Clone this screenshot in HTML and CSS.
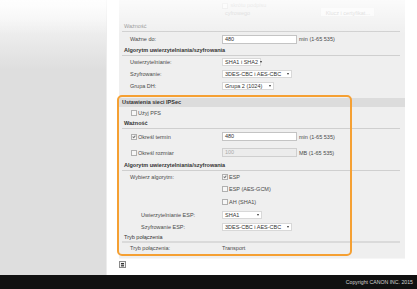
FILE: index.html
```html
<!DOCTYPE html>
<html lang="pl">
<head>
    <meta charset="UTF-8">
    <title>Ustawienia IPSec</title>
    <link rel="stylesheet" href="styles.css">
</head>
<body>

    <div class="page">
        <div class="sidebar"></div>

        <div class="main">
            <div class="panel">
                <div class="faint">
                    <div class="faint-text">
                        <div><span class="box"></span> skrótu podpisu</div>
                        <div class="indent">cyfrowego</div>
                    </div>
                    <div class="faint-btn">Klucz i certyfikat...</div>
                </div>

                <div class="head light">Ważność</div>
                <div class="row tall">
                    <div class="label">Ważne do:</div>
                    <div class="field">480</div>
                    <span class="unit">min (1-65 535)</span>
                </div>

                <div class="head bold">Algorytm uwierzytelniania/szyfrowania</div>
                <div class="row">
                    <div class="label">Uwierzytelnianie:</div>
                    <div class="select w38">SHA1 i SHA2<i></i></div>
                </div>
                <div class="row">
                    <div class="label">Szyfrowanie:</div>
                    <div class="select w70">3DES-CBC i AES-CBC<i></i></div>
                </div>
                <div class="row">
                    <div class="label">Grupa DH:</div>
                    <div class="select w52">Grupa 2 (1024)<i></i></div>
                </div>

                <div class="bar">Ustawienia sieci IPSec</div>
                <div class="row">
                    <div class="label check-label"><span class="box"></span>Użyj PFS</div>
                </div>

                <div class="head bold">Ważność</div>
                <div class="row r15">
                    <div class="label check-label"><span class="box checked"></span>Określ termin</div>
                    <div class="field">480</div>
                    <span class="unit">min (1-65 535)</span>
                </div>
                <div class="row r17">
                    <div class="label check-label"><span class="box"></span>Określ rozmiar</div>
                    <div class="field off">100</div>
                    <span class="unit">MB (1-65 535)</span>
                </div>

                <div class="head bold">Algorytm uwierzytelniania/szyfrowania</div>
                <div class="row">
                    <div class="label">Wybierz algorytm:</div>
                    <div class="opt"><span class="box checked"></span>ESP</div>
                </div>
                <div class="row">
                    <div class="label"></div>
                    <div class="opt"><span class="box"></span>ESP (AES-GCM)</div>
                </div>
                <div class="row r13">
                    <div class="label"></div>
                    <div class="opt"><span class="box"></span>AH (SHA1)</div>
                </div>
                <div class="row r13">
                    <div class="label sub">Uwierzytelnianie ESP:</div>
                    <div class="select w40">SHA1<i></i></div>
                </div>
                <div class="row">
                    <div class="label sub">Szyfrowanie ESP:</div>
                    <div class="select w70">3DES-CBC i AES-CBC<i></i></div>
                </div>

                <div class="head thick">Tryb połączenia</div>
                <div class="row r10">
                    <div class="label">Tryb połączenia:</div>
                    <span>Transport</span>
                </div>

                <div class="highlight"></div>
            </div>

            <div class="to-top">
                <svg width="7" height="7" viewBox="0 0 7 7">
                    <rect x="0.5" y="0.5" width="6" height="6" fill="#f4f4f4" stroke="#8a8a8a"/>
                    <rect x="2" y="2" width="3" height="1" fill="#333"/>
                    <rect x="2" y="3.5" width="3" height="2" fill="#555"/>
                </svg>
            </div>
        </div>

        <div class="fade"></div>
    </div>

    <div class="footer">Copyright CANON INC. 2015</div>

</body>
</html>
```

FILE: styles.css
```css
body {
    margin: 0;
    font-family: "Liberation Sans", Arial, sans-serif;
    font-size: 5.5px;
    color: #4a4a4a;
    background: #fff;
}
.page {
    display: flex;
    height: 275px;
    position: relative;
    overflow: hidden;
}
.sidebar {
    width: 106px;
    background: linear-gradient(#fbfbfb, #dedede 70px, #dedede);
    border-right: 1px solid #ececec;
}
.main {
    flex: 1;
    padding-left: 12px;
}
.panel {
    width: 286px;
    background: #efefef;
    position: relative;
    padding-bottom: 5px;
    border-bottom: 1px solid #f6f6f6;
}
.faint {
    height: 22px;
    display: flex;
    padding-left: 103px;
    color: #c8c8c8;
}
.faint-text {
    padding-top: 1px;
    line-height: 8px;
}
.faint-text .box {
    border-color: #ddd;
    vertical-align: middle;
}
.indent {
    padding-left: 3px;
}
.faint-btn {
    margin: 7px 0 0 54px;
    width: 55px;
    height: 10px;
    line-height: 10px;
    text-align: center;
    border: 1px solid #eee;
    background: #f9f9f9;
    box-sizing: border-box;
}
.head {
    margin: 0 5px 0 3px;
    padding-left: 2px;
    height: 9px;
    line-height: 9px;
    border-bottom: 1px solid #cfcfcf;
}
.head.light {
    color: #8a8a8a;
}
.head.bold {
    font-weight: bold;
    color: #333;
}
.head.thick {
    height: 8px;
    line-height: 8px;
    border-bottom: 2px solid #dadada;
    color: #333;
}
.row {
    display: flex;
    align-items: center;
    height: 12px;
    white-space: nowrap;
}
.row.tall {
    height: 14px;
}
.r10 {
    height: 10px !important;
}
.r13 {
    height: 13px !important;
}
.r15 {
    height: 15px !important;
}
.r17 {
    height: 17px !important;
}
.label {
    width: 92px;
    margin-left: 3px;
    padding-left: 8px;
    flex-shrink: 0;
}
.label.sub {
    width: 81px;
    padding-left: 19px;
}
.check-label {
    display: flex;
    align-items: center;
    width: 91px;
    padding-left: 9px;
}
.box {
    display: inline-block;
    width: 4px;
    height: 4px;
    border: 1px solid #b0b0b0;
    background: #f7f7f7;
    margin-right: 1px;
    position: relative;
}
.box.checked::after {
    content: "";
    position: absolute;
    left: 1px;
    top: 0;
    width: 1px;
    height: 2px;
    border-right: 1px solid #777;
    border-bottom: 1px solid #777;
    transform: rotate(40deg);
}
.opt {
    display: flex;
    align-items: center;
}
.field {
    width: 69px;
    height: 7px;
    line-height: 7px;
    padding: 0 2px;
    border: 1px solid #c4c4c4;
    background: #fff;
    color: #333;
}
.field.off {
    background: #ececec;
    color: #aaa;
    border-color: #cfcfcf;
}
.unit {
    margin-left: 2px;
}
.select {
    display: flex;
    align-items: center;
    justify-content: space-between;
    box-sizing: border-box;
    height: 8px;
    padding: 0 2px;
    border: 1px solid #d8d8d8;
    background: #fff;
    color: #333;
    white-space: nowrap;
}
.select i {
    flex-shrink: 0;
    margin-left: 2px;
    width: 0;
    height: 0;
    border-left: 1.5px solid transparent;
    border-right: 1.5px solid transparent;
    border-top: 2px solid #333;
}
.w38 { width: 39px; }
.w40 { width: 40px; }
.w52 { width: 52px; }
.w70 { width: 70px; }
.bar {
    margin-top: 6px;
    height: 9px;
    line-height: 9px;
    padding-left: 3px;
    background: #dcdcdc;
    font-weight: bold;
    color: #333;
}
.highlight {
    position: absolute;
    left: -2px;
    top: 95px;
    width: 231px;
    height: 157px;
    border: 2px solid #f5a033;
    border-radius: 5px;
}
.to-top {
    margin-top: 2px;
    height: 7px;
}
.to-top svg {
    display: block;
}
.fade {
    position: absolute;
    left: 0;
    right: 0;
    top: 0;
    height: 34px;
    background: linear-gradient(rgba(255, 255, 255, 0.75), rgba(255, 255, 255, 0));
    pointer-events: none;
}
.footer {
    height: 14px;
    line-height: 14px;
    background: #111;
    color: #d4d4d4;
    text-align: right;
    padding-right: 4px;
    font-size: 5.2px;
}
```
